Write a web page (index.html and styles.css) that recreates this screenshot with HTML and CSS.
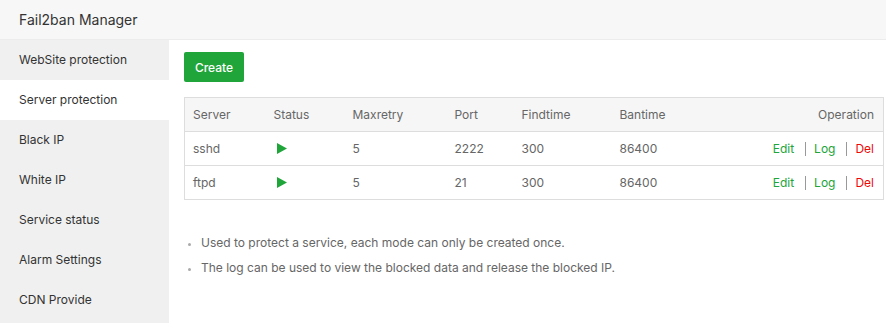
FILE: index.html
```html
<!DOCTYPE html>
<html>
<head>
<meta charset="utf-8">
<link rel="stylesheet" href="styles.css">
</head>
<body>
<div class="app">
  <header class="topbar">Fail2ban Manager</header>
  <div class="main">
    <nav class="sidebar">
      <div class="nav-item">WebSite protection</div>
      <div class="nav-item active">Server protection</div>
      <div class="nav-item">Black IP</div>
      <div class="nav-item">White IP</div>
      <div class="nav-item">Service status</div>
      <div class="nav-item">Alarm Settings</div>
      <div class="nav-item">CDN Provide</div>
    </nav>
    <section class="content">
      <button class="btn-create">Create</button>
      <table class="grid">
        <thead>
          <tr>
            <th class="c-server">Server</th>
            <th class="c-status">Status</th>
            <th class="c-max">Maxretry</th>
            <th class="c-port">Port</th>
            <th class="c-find">Findtime</th>
            <th class="c-ban">Bantime</th>
            <th class="c-op">Operation</th>
          </tr>
        </thead>
        <tbody>
          <tr>
            <td>sshd</td>
            <td><svg class="play" width="10" height="11" viewBox="0 0 10 11"><path d="M0 0 L10 5.5 L0 11 Z" fill="#20a53a"/></svg></td>
            <td>5</td>
            <td>2222</td>
            <td>300</td>
            <td>86400</td>
            <td class="c-op"><span class="ok">Edit</span><span class="sep"></span><span class="ok">Log</span><span class="sep"></span><span class="del">Del</span></td>
          </tr>
          <tr>
            <td>ftpd</td>
            <td><svg class="play" width="10" height="11" viewBox="0 0 10 11"><path d="M0 0 L10 5.5 L0 11 Z" fill="#20a53a"/></svg></td>
            <td>5</td>
            <td>21</td>
            <td>300</td>
            <td>86400</td>
            <td class="c-op"><span class="ok">Edit</span><span class="sep"></span><span class="ok">Log</span><span class="sep"></span><span class="del">Del</span></td>
          </tr>
        </tbody>
      </table>
      <ul class="notes">
        <li>Used to protect a service, each mode can only be created once.</li>
        <li>The log can be used to view the blocked data and release the blocked IP.</li>
      </ul>
    </section>
  </div>
</div>
</body>
</html>
```

FILE: styles.css
```css
* { box-sizing: border-box; }
html, body { margin: 0; padding: 0; background: #fff; }
body {
  font-family: Inter, "Noto Sans", "Liberation Sans", sans-serif;
  color: #333;
  width: 886px;
  height: 323px;
  overflow: hidden;
}
.app { display: flex; flex-direction: column; height: 323px; }
.topbar {
  height: 40px;
  line-height: 39px;
  padding-left: 19px;
  font-size: 14px;
  color: #333;
  background: #f7f7f7;
  border-bottom: 1px solid #ececec;
}
.main { display: flex; flex: 1; }
.sidebar {
  width: 169px;
  background: #f0f0f0;
  display: flex;
  flex-direction: column;
}
.nav-item {
  height: 40px;
  line-height: 40px;
  padding-left: 19px;
  font-size: 12px;
  color: #333;
}
.nav-item.active { background: #fff; }
.content {
  flex: 1;
  padding: 12px 2px 0 15px;
}
.btn-create {
  display: block;
  height: 30px;
  width: 60px;
  padding: 0;
  border: none;
  border-radius: 2px;
  background: #20a53a;
  color: #fff;
  font-family: inherit;
  font-size: 12px;
  font-weight: 500;
}
.grid {
  margin-top: 15px;
  width: 700px;
  border-collapse: collapse;
  border: 1px solid #ddd;
  font-size: 12px;
  color: #666;
}
.grid th, .grid td {
  height: 34px;
  padding: 0 0 0 8px;
  text-align: left;
  font-weight: normal;
  border-bottom: 1px solid #ddd;
}
.grid th { background: #f6f6f6; }
.c-server { width: 81px; }
.c-status { width: 79px; }
.c-max { width: 102px; }
.c-port { width: 67px; }
.c-find { width: 98px; }
.c-ban { width: 120px; }
.grid .c-op { text-align: right; padding-right: 9px; }
.play { display: block; margin-left: 3px; }
.ok { color: #20a53a; }
.del { color: #ef0808; }
.sep {
  display: inline-block;
  width: 1px;
  height: 14px;
  background: #999;
  vertical-align: -3px;
  margin: 0 8px 0 11px;
}
.notes {
  margin: 30px 0 0;
  padding-left: 17px;
  font-size: 12px;
  color: #666;
  line-height: 25px;
}
.notes li::marker { color: #aaa; font-size: 10px; }
```
